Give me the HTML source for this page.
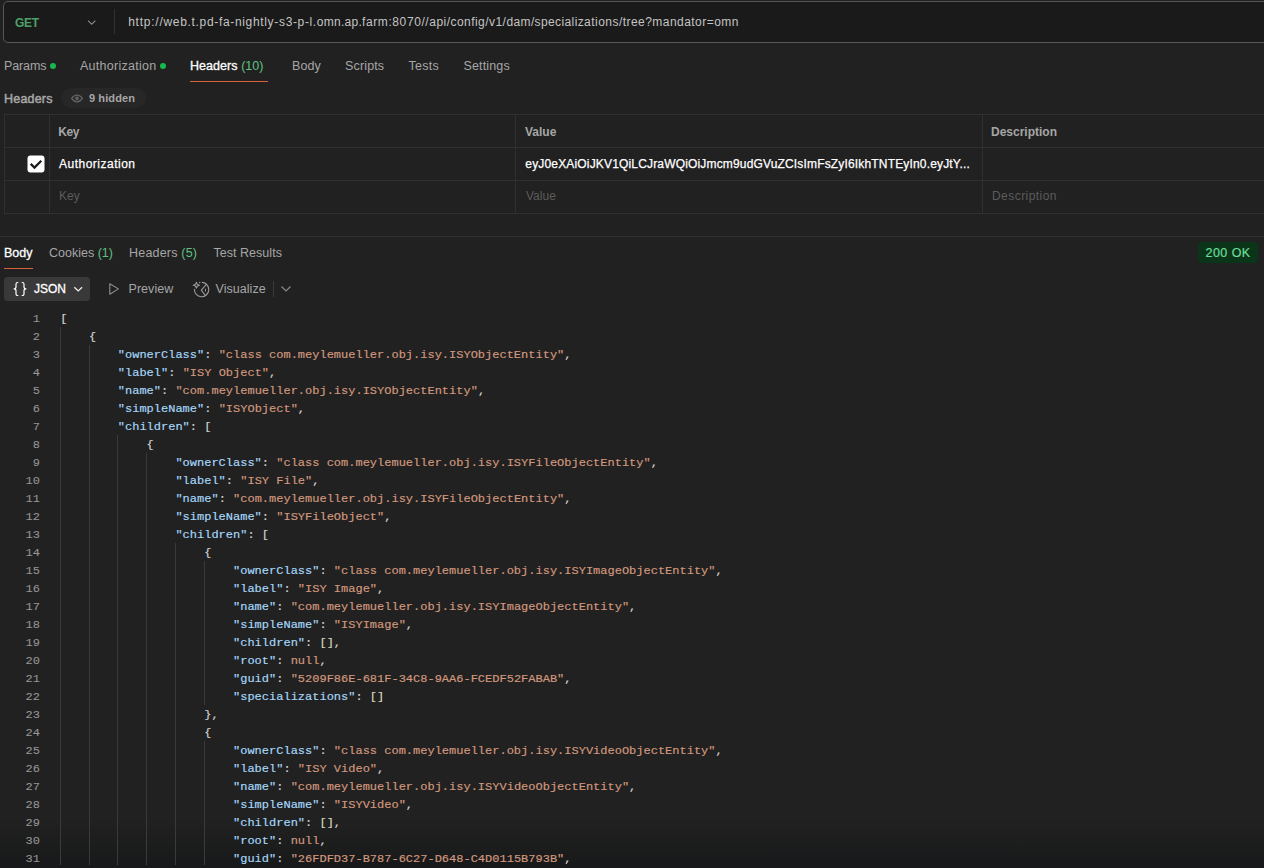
<!DOCTYPE html>
<html>
<head>
<meta charset="utf-8">
<title>Postman</title>
<style>
*{box-sizing:border-box;margin:0;padding:0}
html,body{width:1264px;height:868px;overflow:hidden;background:#212121}
body{font-family:"Liberation Sans",sans-serif;font-size:12px;color:#a6a6a6;position:relative}
.abs{position:absolute;white-space:nowrap}
.t{position:absolute;white-space:nowrap;line-height:16px;height:16px}
/* url bar */
#urlbox{left:3px;top:1px;width:1300px;height:42px;border:1px solid #575757;border-radius:5px;background:#1a1a1a}
#get{left:15px;top:15px;color:#4ca06a;font-weight:bold;font-size:12px;letter-spacing:-0.3px}
#urlsep{left:114px;top:9px;width:1px;height:25px;background:#323232}
.us{top:14px;color:#c4c4c4;font-size:12px}
/* tabs */
.tab{top:58px;color:#a6a6a6;font-size:12.5px}
.dot{width:6.4px;height:6.4px;border-radius:50%;background:#17b850}
.ul{height:1px;background:#d8623a}
.green{color:#62c084}
/* table */
.hl{position:absolute;height:1px;background:#303030}
.vl{position:absolute;width:1px;background:#303030}
.th{font-weight:bold;color:#a6a6a6;font-size:12px}
.ph{color:#5c5c5c;font-size:12px}
.wt{color:#ffffff;font-size:12px;-webkit-text-stroke:0.25px #fff}
/* code */
#code{position:absolute;left:0;top:309px;width:1264px;height:559px;font-family:"Liberation Mono",monospace;font-size:12px;line-height:18px}
.ln{position:absolute;left:0;width:40px;text-align:right;color:#969696;height:18px;margin-top:1px;-webkit-text-stroke:0.08px currentColor;transform:scaleY(0.88);transform-origin:0 12.2px}
.cl{position:absolute;left:60.2px;height:18px;white-space:pre;color:#d4d4d4;margin-top:1px;-webkit-text-stroke:0.18px currentColor;transform:scaleY(0.88);transform-origin:0 12.2px}
.k{color:#a6d8fa}
.s{color:#d2987e}
.n{color:#d2987e}
.b{color:#dddcbe}
.g{position:absolute;width:1px;background:#3a3a3a}
#fade{position:absolute;left:0;top:819px;width:1264px;height:49px;background:linear-gradient(to bottom,#212121 0,#18191a 46px,#18191a 49px)}
</style>
</head>
<body>
<!-- URL BAR -->
<div class="abs" id="urlbox"></div>
<div class="t" id="get">GET</div>
<svg class="abs" style="left:86.2px;top:17.5px" width="12" height="10" viewBox="0 0 12 10"><path d="M2 2.6 L5.7 6.2 L9.4 2.6" fill="none" stroke="#8a8a8a" stroke-width="1.1"/></svg>
<div class="abs" id="urlsep"></div>
<div id="url"><span class="t us" style="left:128.2px;letter-spacing:0.760px">http://</span><span class="t us" style="left:163.5px;letter-spacing:0.670px">web.t.pd-fa-nightly-</span><span class="t us" style="left:279.0px;letter-spacing:0.640px">s3-p-l.</span><span class="t us" style="left:316.8px;letter-spacing:0.260px">omn.ap.</span><span class="t us" style="left:362.0px;letter-spacing:0.600px">farm:8070//</span><span class="t us" style="left:429.3px;letter-spacing:0.457px">api/config/v1/</span><span class="t us" style="left:506.4px;letter-spacing:0.385px">dam/specializ</span><span class="t us" style="left:584.1px;letter-spacing:0.460px">ations/tree?mandator=omn</span></div>

<!-- REQUEST TABS -->
<div class="t tab" style="left:4px;letter-spacing:-0.12px">Params</div>
<div class="abs dot" style="left:49.9px;top:62.9px"></div>
<div class="t tab" style="left:80px;letter-spacing:0.27px">Authorization</div>
<div class="abs dot" style="left:159.7px;top:62.9px"></div>
<div class="t tab" style="left:190px;color:#fff;letter-spacing:0.05px"><span style="-webkit-text-stroke:0.3px #fff">Headers</span> <span class="green">(10)</span></div>
<div class="abs ul" style="left:190px;top:81px;width:78px"></div>
<div class="t tab" style="left:292px;letter-spacing:0.05px">Body</div>
<div class="t tab" style="left:345px;letter-spacing:0.15px">Scripts</div>
<div class="t tab" style="left:408.5px;letter-spacing:0.3px">Tests</div>
<div class="t tab" style="left:463.5px;letter-spacing:0.15px">Settings</div>

<!-- HEADERS LABEL -->
<div class="t" style="left:4px;top:91px;font-size:12.5px;letter-spacing:0.2px;color:#a6a6a6;-webkit-text-stroke:0.5px #a6a6a6">Headers</div>
<div class="abs" style="left:61px;top:88px;width:85px;height:20px;border-radius:10px;background:#272727"></div>
<svg class="abs" style="left:70px;top:93px" width="14" height="11" viewBox="0 0 14 11"><path d="M1.6 5.4 C3.2 2.9 5 2 7 2 C9 2 10.8 2.9 12.4 5.4 C10.8 7.9 9 8.8 7 8.8 C5 8.8 3.2 7.9 1.6 5.4 Z" fill="none" stroke="#636363" stroke-width="1.25"/><circle cx="7" cy="5.4" r="1.8" fill="#636363"/></svg>
<div class="t" style="left:89px;top:90px;font-size:11px;font-weight:bold;letter-spacing:0.1px;color:#a6a6a6">9 hidden</div>

<!-- TABLE -->
<div class="hl" style="left:4px;top:114px;width:1260px"></div>
<div class="hl" style="left:4px;top:147px;width:1260px"></div>
<div class="hl" style="left:4px;top:180px;width:1260px"></div>
<div class="hl" style="left:4px;top:213px;width:1260px"></div>
<div class="vl" style="left:4px;top:114px;height:100px"></div>
<div class="vl" style="left:49px;top:114px;height:100px"></div>
<div class="vl" style="left:515px;top:114px;height:100px"></div>
<div class="vl" style="left:982px;top:114px;height:100px"></div>
<div class="t th" style="left:58.3px;top:124px;letter-spacing:-0.45px">Key</div>
<div class="t th" style="left:525px;top:124px">Value</div>
<div class="t th" style="left:991px;top:124px">Description</div>
<svg class="abs" style="left:27px;top:155px" width="19" height="19" viewBox="0 0 19 19"><rect x="0.5" y="0.5" width="17" height="17" rx="3" fill="#fff"/><path d="M3.7 8.9 L7.5 12.6 L14.3 5.7" fill="none" stroke="#1c1c1c" stroke-width="2.2"/></svg>
<div class="t wt" style="left:59px;top:156px;letter-spacing:0.5px">Authorization</div>
<div class="t wt" style="left:525.3px;top:156px;letter-spacing:0.165px">eyJ0eXAiOiJKV1QiLCJraWQiOiJmcm9udGVuZCIsImFsZyI6IkhTNTEyIn0.eyJtY...</div>
<div class="t ph" style="left:59px;top:188px">Key</div>
<div class="t ph" style="left:526px;top:188px">Value</div>
<div class="t ph" style="left:992px;top:188px;letter-spacing:0.45px">Description</div>

<!-- RESPONSE DIVIDER -->
<div class="hl" style="left:0;top:236px;width:1264px"></div>

<!-- RESPONSE TABS -->
<div class="t tab" style="left:4px;top:245px;color:#fff;-webkit-text-stroke:0.3px #fff">Body</div>
<div class="abs ul" style="left:4px;top:268px;width:29px"></div>
<div class="t tab" style="left:49px;top:245px">Cookies <span class="green">(1)</span></div>
<div class="t tab" style="left:129px;top:245px;letter-spacing:0.2px">Headers <span class="green">(5)</span></div>
<div class="t tab" style="left:213.5px;top:245px;letter-spacing:0.03px">Test Results</div>
<div class="abs" style="left:1197.5px;top:242px;width:60.5px;height:21px;border-radius:4px;background:#0a3519"></div>
<div class="t" style="left:1205.5px;top:245px;font-size:12.5px;letter-spacing:0.45px;color:#6bdd9a;-webkit-text-stroke:0.2px #6bdd9a">200 OK</div>

<!-- TOOLBAR -->
<div class="abs" style="left:4px;top:277px;width:86px;height:24px;border-radius:4px;background:#393939"></div>
<svg class="abs" style="left:0;top:272px" width="40" height="34" viewBox="0 0 40 34"><path d="M18.3 10.5 H17.7 Q16 10.5 16 12.2 V15.1 Q16 16.9 13.7 16.9 Q16 16.9 16 18.7 V21.9 Q16 23.5 17.7 23.5 H18.3 M21.7 10.5 H22.3 Q24 10.5 24 12.2 V15.1 Q24 16.9 26.3 16.9 Q24 16.9 24 18.7 V21.9 Q24 23.5 22.3 23.5 H21.7" fill="none" stroke="#fff" stroke-width="1.2"/></svg>
<div class="t" style="left:34px;top:281px;font-size:12px;color:#fff;-webkit-text-stroke:0.3px #fff">JSON</div>
<svg class="abs" style="left:72px;top:284px" width="12" height="10" viewBox="0 0 12 10"><path d="M2.3 3.3 L6.2 6.9 L10.1 3.3" fill="none" stroke="#f0f0f0" stroke-width="1.25"/></svg>
<svg class="abs" style="left:100px;top:274px" width="40" height="30" viewBox="0 0 40 30"><path d="M9.8 9.8 L18.4 14.9 L9.8 20.2 Z" fill="none" stroke="#8f8f8f" stroke-width="1.1" stroke-linejoin="round"/></svg>
<div class="t" style="left:128.5px;top:281px;font-size:12.5px;letter-spacing:0.05px">Preview</div>
<svg class="abs" style="left:186px;top:274px" width="40" height="30" viewBox="0 0 40 30"><g fill="none" stroke="#9a9a9a" stroke-width="1.1" stroke-linecap="round" stroke-linejoin="round"><path d="M8.4 15.3 A7.2 7.2 0 1 0 16.3 8.4"/><path d="M20.4 10.4 L15.3 16.1 L18.9 20.8"/><path d="M10.4 8.3 Q10.7 10.95 13.6 11.25 Q10.7 11.55 10.4 14.3 Q10.1 11.55 7.2 11.25 Q10.1 10.95 10.4 8.3 Z" stroke-width="1.1"/></g><ellipse cx="19.5" cy="16.1" rx="0.55" ry="1.7" fill="#9a9a9a"/><circle cx="13.7" cy="8.5" r="0.75" fill="#9a9a9a"/></svg>
<div class="t" style="left:215.5px;top:281px;font-size:12.5px;letter-spacing:0.05px">Visualize</div>
<div class="abs" style="left:273px;top:281px;width:1px;height:16px;background:#3a3a3a"></div>
<svg class="abs" style="left:280px;top:284px" width="12" height="10" viewBox="0 0 12 10"><path d="M1.5 2.5 L6 7 L10.5 2.5" fill="none" stroke="#8a8a8a" stroke-width="1.2"/></svg>

<!-- CODE -->
<div id="fade"></div>
<div id="code">
<!--CS-->
<div class="ln" style="top:0px">1</div>
<div class="cl" style="top:0px">[</div>
<div class="ln" style="top:18px">2</div>
<div class="cl" style="top:18px">    {</div>
<div class="g" style="left:59.8px;top:18px;height:18px"></div>
<div class="ln" style="top:36px">3</div>
<div class="cl" style="top:36px">        <span class="k">&quot;ownerClass&quot;</span>: <span class="s">&quot;class com.meylemueller.obj.isy.ISYObjectEntity&quot;</span>,</div>
<div class="g" style="left:59.8px;top:36px;height:18px"></div>
<div class="g" style="left:88.6px;top:36px;height:18px"></div>
<div class="ln" style="top:54px">4</div>
<div class="cl" style="top:54px">        <span class="k">&quot;label&quot;</span>: <span class="s">&quot;ISY Object&quot;</span>,</div>
<div class="g" style="left:59.8px;top:54px;height:18px"></div>
<div class="g" style="left:88.6px;top:54px;height:18px"></div>
<div class="ln" style="top:72px">5</div>
<div class="cl" style="top:72px">        <span class="k">&quot;name&quot;</span>: <span class="s">&quot;com.meylemueller.obj.isy.ISYObjectEntity&quot;</span>,</div>
<div class="g" style="left:59.8px;top:72px;height:18px"></div>
<div class="g" style="left:88.6px;top:72px;height:18px"></div>
<div class="ln" style="top:90px">6</div>
<div class="cl" style="top:90px">        <span class="k">&quot;simpleName&quot;</span>: <span class="s">&quot;ISYObject&quot;</span>,</div>
<div class="g" style="left:59.8px;top:90px;height:18px"></div>
<div class="g" style="left:88.6px;top:90px;height:18px"></div>
<div class="ln" style="top:108px">7</div>
<div class="cl" style="top:108px">        <span class="k">&quot;children&quot;</span>: [</div>
<div class="g" style="left:59.8px;top:108px;height:18px"></div>
<div class="g" style="left:88.6px;top:108px;height:18px"></div>
<div class="ln" style="top:126px">8</div>
<div class="cl" style="top:126px">            {</div>
<div class="g" style="left:59.8px;top:126px;height:18px"></div>
<div class="g" style="left:88.6px;top:126px;height:18px"></div>
<div class="g" style="left:117.4px;top:126px;height:18px"></div>
<div class="ln" style="top:144px">9</div>
<div class="cl" style="top:144px">                <span class="k">&quot;ownerClass&quot;</span>: <span class="s">&quot;class com.meylemueller.obj.isy.ISYFileObjectEntity&quot;</span>,</div>
<div class="g" style="left:59.8px;top:144px;height:18px"></div>
<div class="g" style="left:88.6px;top:144px;height:18px"></div>
<div class="g" style="left:117.4px;top:144px;height:18px"></div>
<div class="g" style="left:146.3px;top:144px;height:18px"></div>
<div class="ln" style="top:162px">10</div>
<div class="cl" style="top:162px">                <span class="k">&quot;label&quot;</span>: <span class="s">&quot;ISY File&quot;</span>,</div>
<div class="g" style="left:59.8px;top:162px;height:18px"></div>
<div class="g" style="left:88.6px;top:162px;height:18px"></div>
<div class="g" style="left:117.4px;top:162px;height:18px"></div>
<div class="g" style="left:146.3px;top:162px;height:18px"></div>
<div class="ln" style="top:180px">11</div>
<div class="cl" style="top:180px">                <span class="k">&quot;name&quot;</span>: <span class="s">&quot;com.meylemueller.obj.isy.ISYFileObjectEntity&quot;</span>,</div>
<div class="g" style="left:59.8px;top:180px;height:18px"></div>
<div class="g" style="left:88.6px;top:180px;height:18px"></div>
<div class="g" style="left:117.4px;top:180px;height:18px"></div>
<div class="g" style="left:146.3px;top:180px;height:18px"></div>
<div class="ln" style="top:198px">12</div>
<div class="cl" style="top:198px">                <span class="k">&quot;simpleName&quot;</span>: <span class="s">&quot;ISYFileObject&quot;</span>,</div>
<div class="g" style="left:59.8px;top:198px;height:18px"></div>
<div class="g" style="left:88.6px;top:198px;height:18px"></div>
<div class="g" style="left:117.4px;top:198px;height:18px"></div>
<div class="g" style="left:146.3px;top:198px;height:18px"></div>
<div class="ln" style="top:216px">13</div>
<div class="cl" style="top:216px">                <span class="k">&quot;children&quot;</span>: [</div>
<div class="g" style="left:59.8px;top:216px;height:18px"></div>
<div class="g" style="left:88.6px;top:216px;height:18px"></div>
<div class="g" style="left:117.4px;top:216px;height:18px"></div>
<div class="g" style="left:146.3px;top:216px;height:18px"></div>
<div class="ln" style="top:234px">14</div>
<div class="cl" style="top:234px">                    {</div>
<div class="g" style="left:59.8px;top:234px;height:18px"></div>
<div class="g" style="left:88.6px;top:234px;height:18px"></div>
<div class="g" style="left:117.4px;top:234px;height:18px"></div>
<div class="g" style="left:146.3px;top:234px;height:18px"></div>
<div class="g" style="left:175.1px;top:234px;height:18px"></div>
<div class="ln" style="top:252px">15</div>
<div class="cl" style="top:252px">                        <span class="k">&quot;ownerClass&quot;</span>: <span class="s">&quot;class com.meylemueller.obj.isy.ISYImageObjectEntity&quot;</span>,</div>
<div class="g" style="left:59.8px;top:252px;height:18px"></div>
<div class="g" style="left:88.6px;top:252px;height:18px"></div>
<div class="g" style="left:117.4px;top:252px;height:18px"></div>
<div class="g" style="left:146.3px;top:252px;height:18px"></div>
<div class="g" style="left:175.1px;top:252px;height:18px"></div>
<div class="g" style="left:203.9px;top:252px;height:18px"></div>
<div class="ln" style="top:270px">16</div>
<div class="cl" style="top:270px">                        <span class="k">&quot;label&quot;</span>: <span class="s">&quot;ISY Image&quot;</span>,</div>
<div class="g" style="left:59.8px;top:270px;height:18px"></div>
<div class="g" style="left:88.6px;top:270px;height:18px"></div>
<div class="g" style="left:117.4px;top:270px;height:18px"></div>
<div class="g" style="left:146.3px;top:270px;height:18px"></div>
<div class="g" style="left:175.1px;top:270px;height:18px"></div>
<div class="g" style="left:203.9px;top:270px;height:18px"></div>
<div class="ln" style="top:288px">17</div>
<div class="cl" style="top:288px">                        <span class="k">&quot;name&quot;</span>: <span class="s">&quot;com.meylemueller.obj.isy.ISYImageObjectEntity&quot;</span>,</div>
<div class="g" style="left:59.8px;top:288px;height:18px"></div>
<div class="g" style="left:88.6px;top:288px;height:18px"></div>
<div class="g" style="left:117.4px;top:288px;height:18px"></div>
<div class="g" style="left:146.3px;top:288px;height:18px"></div>
<div class="g" style="left:175.1px;top:288px;height:18px"></div>
<div class="g" style="left:203.9px;top:288px;height:18px"></div>
<div class="ln" style="top:306px">18</div>
<div class="cl" style="top:306px">                        <span class="k">&quot;simpleName&quot;</span>: <span class="s">&quot;ISYImage&quot;</span>,</div>
<div class="g" style="left:59.8px;top:306px;height:18px"></div>
<div class="g" style="left:88.6px;top:306px;height:18px"></div>
<div class="g" style="left:117.4px;top:306px;height:18px"></div>
<div class="g" style="left:146.3px;top:306px;height:18px"></div>
<div class="g" style="left:175.1px;top:306px;height:18px"></div>
<div class="g" style="left:203.9px;top:306px;height:18px"></div>
<div class="ln" style="top:324px">19</div>
<div class="cl" style="top:324px">                        <span class="k">&quot;children&quot;</span>: <span class="b">[]</span>,</div>
<div class="g" style="left:59.8px;top:324px;height:18px"></div>
<div class="g" style="left:88.6px;top:324px;height:18px"></div>
<div class="g" style="left:117.4px;top:324px;height:18px"></div>
<div class="g" style="left:146.3px;top:324px;height:18px"></div>
<div class="g" style="left:175.1px;top:324px;height:18px"></div>
<div class="g" style="left:203.9px;top:324px;height:18px"></div>
<div class="ln" style="top:342px">20</div>
<div class="cl" style="top:342px">                        <span class="k">&quot;root&quot;</span>: <span class="n">null</span>,</div>
<div class="g" style="left:59.8px;top:342px;height:18px"></div>
<div class="g" style="left:88.6px;top:342px;height:18px"></div>
<div class="g" style="left:117.4px;top:342px;height:18px"></div>
<div class="g" style="left:146.3px;top:342px;height:18px"></div>
<div class="g" style="left:175.1px;top:342px;height:18px"></div>
<div class="g" style="left:203.9px;top:342px;height:18px"></div>
<div class="ln" style="top:360px">21</div>
<div class="cl" style="top:360px">                        <span class="k">&quot;guid&quot;</span>: <span class="s">&quot;5209F86E-681F-34C8-9AA6-FCEDF52FABAB&quot;</span>,</div>
<div class="g" style="left:59.8px;top:360px;height:18px"></div>
<div class="g" style="left:88.6px;top:360px;height:18px"></div>
<div class="g" style="left:117.4px;top:360px;height:18px"></div>
<div class="g" style="left:146.3px;top:360px;height:18px"></div>
<div class="g" style="left:175.1px;top:360px;height:18px"></div>
<div class="g" style="left:203.9px;top:360px;height:18px"></div>
<div class="ln" style="top:378px">22</div>
<div class="cl" style="top:378px">                        <span class="k">&quot;specializations&quot;</span>: <span class="b">[]</span></div>
<div class="g" style="left:59.8px;top:378px;height:18px"></div>
<div class="g" style="left:88.6px;top:378px;height:18px"></div>
<div class="g" style="left:117.4px;top:378px;height:18px"></div>
<div class="g" style="left:146.3px;top:378px;height:18px"></div>
<div class="g" style="left:175.1px;top:378px;height:18px"></div>
<div class="g" style="left:203.9px;top:378px;height:18px"></div>
<div class="ln" style="top:396px">23</div>
<div class="cl" style="top:396px">                    },</div>
<div class="g" style="left:59.8px;top:396px;height:18px"></div>
<div class="g" style="left:88.6px;top:396px;height:18px"></div>
<div class="g" style="left:117.4px;top:396px;height:18px"></div>
<div class="g" style="left:146.3px;top:396px;height:18px"></div>
<div class="g" style="left:175.1px;top:396px;height:18px"></div>
<div class="ln" style="top:414px">24</div>
<div class="cl" style="top:414px">                    {</div>
<div class="g" style="left:59.8px;top:414px;height:18px"></div>
<div class="g" style="left:88.6px;top:414px;height:18px"></div>
<div class="g" style="left:117.4px;top:414px;height:18px"></div>
<div class="g" style="left:146.3px;top:414px;height:18px"></div>
<div class="g" style="left:175.1px;top:414px;height:18px"></div>
<div class="ln" style="top:432px">25</div>
<div class="cl" style="top:432px">                        <span class="k">&quot;ownerClass&quot;</span>: <span class="s">&quot;class com.meylemueller.obj.isy.ISYVideoObjectEntity&quot;</span>,</div>
<div class="g" style="left:59.8px;top:432px;height:18px"></div>
<div class="g" style="left:88.6px;top:432px;height:18px"></div>
<div class="g" style="left:117.4px;top:432px;height:18px"></div>
<div class="g" style="left:146.3px;top:432px;height:18px"></div>
<div class="g" style="left:175.1px;top:432px;height:18px"></div>
<div class="g" style="left:203.9px;top:432px;height:18px"></div>
<div class="ln" style="top:450px">26</div>
<div class="cl" style="top:450px">                        <span class="k">&quot;label&quot;</span>: <span class="s">&quot;ISY Video&quot;</span>,</div>
<div class="g" style="left:59.8px;top:450px;height:18px"></div>
<div class="g" style="left:88.6px;top:450px;height:18px"></div>
<div class="g" style="left:117.4px;top:450px;height:18px"></div>
<div class="g" style="left:146.3px;top:450px;height:18px"></div>
<div class="g" style="left:175.1px;top:450px;height:18px"></div>
<div class="g" style="left:203.9px;top:450px;height:18px"></div>
<div class="ln" style="top:468px">27</div>
<div class="cl" style="top:468px">                        <span class="k">&quot;name&quot;</span>: <span class="s">&quot;com.meylemueller.obj.isy.ISYVideoObjectEntity&quot;</span>,</div>
<div class="g" style="left:59.8px;top:468px;height:18px"></div>
<div class="g" style="left:88.6px;top:468px;height:18px"></div>
<div class="g" style="left:117.4px;top:468px;height:18px"></div>
<div class="g" style="left:146.3px;top:468px;height:18px"></div>
<div class="g" style="left:175.1px;top:468px;height:18px"></div>
<div class="g" style="left:203.9px;top:468px;height:18px"></div>
<div class="ln" style="top:486px">28</div>
<div class="cl" style="top:486px">                        <span class="k">&quot;simpleName&quot;</span>: <span class="s">&quot;ISYVideo&quot;</span>,</div>
<div class="g" style="left:59.8px;top:486px;height:18px"></div>
<div class="g" style="left:88.6px;top:486px;height:18px"></div>
<div class="g" style="left:117.4px;top:486px;height:18px"></div>
<div class="g" style="left:146.3px;top:486px;height:18px"></div>
<div class="g" style="left:175.1px;top:486px;height:18px"></div>
<div class="g" style="left:203.9px;top:486px;height:18px"></div>
<div class="ln" style="top:504px">29</div>
<div class="cl" style="top:504px">                        <span class="k">&quot;children&quot;</span>: <span class="b">[]</span>,</div>
<div class="g" style="left:59.8px;top:504px;height:18px"></div>
<div class="g" style="left:88.6px;top:504px;height:18px"></div>
<div class="g" style="left:117.4px;top:504px;height:18px"></div>
<div class="g" style="left:146.3px;top:504px;height:18px"></div>
<div class="g" style="left:175.1px;top:504px;height:18px"></div>
<div class="g" style="left:203.9px;top:504px;height:18px"></div>
<div class="ln" style="top:522px">30</div>
<div class="cl" style="top:522px">                        <span class="k">&quot;root&quot;</span>: <span class="n">null</span>,</div>
<div class="g" style="left:59.8px;top:522px;height:18px"></div>
<div class="g" style="left:88.6px;top:522px;height:18px"></div>
<div class="g" style="left:117.4px;top:522px;height:18px"></div>
<div class="g" style="left:146.3px;top:522px;height:18px"></div>
<div class="g" style="left:175.1px;top:522px;height:18px"></div>
<div class="g" style="left:203.9px;top:522px;height:18px"></div>
<div class="ln" style="top:540px">31</div>
<div class="cl" style="top:540px">                        <span class="k">&quot;guid&quot;</span>: <span class="s">&quot;26FDFD37-B787-6C27-D648-C4D0115B793B&quot;</span>,</div>
<div class="g" style="left:59.8px;top:540px;height:16px"></div>
<div class="g" style="left:88.6px;top:540px;height:16px"></div>
<div class="g" style="left:117.4px;top:540px;height:16px"></div>
<div class="g" style="left:146.3px;top:540px;height:16px"></div>
<div class="g" style="left:175.1px;top:540px;height:16px"></div>
<div class="g" style="left:203.9px;top:540px;height:16px"></div>
<!--CE-->
</div>
</body>
</html>
